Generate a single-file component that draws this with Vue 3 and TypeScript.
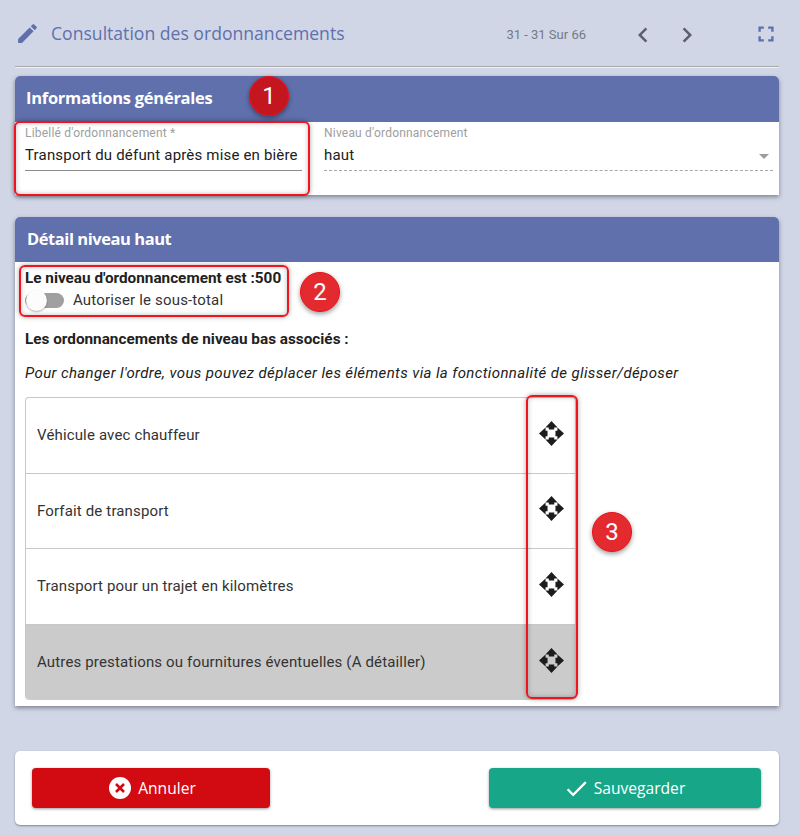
<script setup lang="ts">
const rows = [
  { label: 'Véhicule avec chauffeur', active: false },
  { label: 'Forfait de transport', active: false },
  { label: 'Transport pour un trajet en kilomètres', active: false },
  { label: 'Autres prestations ou fournitures éventuelles (A détailler)', active: true },
]
</script>

<template>
  <div class="page">
    <header class="topbar">
      <svg class="edit-icon" viewBox="0 0 24 24"><path d="M3 17.25V21h3.75L17.81 9.94l-3.75-3.75L3 17.25zM20.71 7.04a1 1 0 0 0 0-1.41l-2.34-2.34a1 1 0 0 0-1.41 0l-1.83 1.83 3.75 3.75 1.83-1.83z" /></svg>
      <h1 class="title">Consultation des ordonnancements</h1>
      <span class="pager">31 - 31 Sur 66</span>
      <svg class="chevron prev" viewBox="0 0 24 24"><path d="M15.41 7.41 14 6l-6 6 6 6 1.41-1.41L10.83 12z" /></svg>
      <svg class="chevron next" viewBox="0 0 24 24"><path d="M8.59 16.59 10 18l6-6-6-6-1.41 1.41L13.17 12z" /></svg>
      <svg class="fullscreen" viewBox="0 0 24 24"><path d="M5 5h5v2.200H7.200V10H5V5zm9 0h5v5h-2.200V7.200H14V5zM5 14h2.200v2.800H10V19H5v-5zm11.800 0H19v5h-5v-2.200h2.800V14z" /></svg>
    </header>

    <section class="card first">
      <div class="card-head">Informations générales</div>
      <div class="fields">
        <div class="field">
          <label>Libellé d'ordonnancement *</label>
          <div class="value solid">Transport du défunt après mise en bière</div>
        </div>
        <div class="field">
          <label>Niveau d'ordonnancement</label>
          <div class="value dotted">haut<span class="caret"></span></div>
        </div>
      </div>
    </section>

    <section class="card second">
      <div class="card-head detail">Détail niveau haut</div>
      <div class="detail-body">
        <div class="level">Le niveau d'ordonnancement est :500</div>
        <div class="toggle-row">
          <span class="toggle"><span class="knob"></span></span>
          <span>Autoriser le sous-total</span>
        </div>
        <div class="assoc">Les ordonnancements de niveau bas associés :</div>
        <div class="hint">Pour changer l'ordre, vous pouvez déplacer les éléments via la fonctionnalité de glisser/déposer</div>
        <ul class="list">
          <li v-for="row in rows" :key="row.label" :class="{ active: row.active }">
            <span>{{ row.label }}</span>
            <svg class="move" viewBox="0 0 24 24">
              <path d="M12 0l5.800 6.300H14.600V8.200h-5.200V6.300H6.200zM12 24l-5.800-6.300H9.400V15.800h5.200v1.900h3.200zM0 12l6.300-5.800V9.400H8.200v5.200H6.300v3.200zM24 12l-6.300 5.800V14.600H15.800V9.400h1.900V6.200z" />
            </svg>
          </li>
        </ul>
      </div>
    </section>

    <footer class="card actions">
      <button class="btn cancel">
        <svg class="x-icon" viewBox="0 0 24 24"><circle cx="12" cy="12" r="11" fill="#fff" /><path d="M8 8l8 8m0-8l-8 8" stroke="#d20a11" stroke-width="2.600" fill="none" /></svg>
        Annuler
      </button>
      <button class="btn save">
        <svg class="check-icon" viewBox="0 0 24 24"><path d="M9 16.170 4.830 12l-1.420 1.410L9 19 21 7l-1.410-1.410z" /></svg>
        Sauvegarder
      </button>
    </footer>

    <!-- annotations drawn on top of the screenshot -->
    <div class="mark box-1"></div>
    <div class="mark box-2"></div>
    <div class="mark box-3"></div>
    <div class="badge badge-1">1</div>
    <div class="badge badge-2">2</div>
    <div class="badge badge-3">3</div>
  </div>
</template>

<style scoped>
.page {
  position: relative;
  width: 800px;
  height: 835px;
  box-sizing: border-box;
  padding: 0 21px 0 15px;
  background: #d0d6e6;
  font-family: Roboto, sans-serif;
  color: #212121;
  overflow: hidden;
}

.topbar {
  display: flex;
  align-items: center;
  height: 66px;
  border-bottom: 1px solid #a9a9a9;
  box-shadow: 0 1px 0 #eef0f6;
}
.edit-icon {
  width: 25px;
  height: 25px;
  margin: 0 11px 0 0;
  fill: #6070ad;
}
.title {
  flex: 1;
  margin: 0;
  font: 400 17.600px "Open Sans", sans-serif;
  color: #6070ad;
}
.pager {
  font-size: 13px;
  color: #757a85;
  margin: 2px 42px 0 0;
}
.chevron {
  width: 30px;
  height: 30px;
  margin-top: 4px;
  fill: #5c5f69;
}
.next {
  margin-left: 14px;
  margin-right: 51px;
}
.fullscreen {
  width: 26px;
  height: 26px;
  margin-top: 2px;
  fill: #6070ad;
}

.card {
  background: #fff;
  border-radius: 5px 5px 0 0;
  box-shadow: 0 2px 4px rgba(60, 64, 80, 0.55);
}
.first {
  margin-top: 9px;
  height: 119px;
}
.second {
  margin-top: 22px;
  height: 489px;
}
.card-head {
  height: 46px;
  padding-left: 11px;
  background: #6070ad;
  border-radius: 5px 5px 0 0;
  color: #fff;
  font: 700 16.500px/44px "Open Sans", sans-serif;
  letter-spacing: -0.27px;
}
.detail {
  height: 45px;
  padding-left: 12px;
  letter-spacing: -0.45px;
}

.fields {
  display: grid;
  grid-template-columns: 277px 449px;
  gap: 22px;
  padding: 4px 0 0 10px;
}
.field label {
  display: block;
  font-size: 12px;
  line-height: 14px;
  letter-spacing: 0.2px;
  color: #9e9e9e;
}
.value {
  position: relative;
  height: 29px;
  margin-top: 1px;
  font-size: 15px;
  line-height: 29px;
  letter-spacing: 0.18px;
  white-space: nowrap;
}
.solid {
  border-bottom: 1px solid #8b8b8b;
}
.dotted {
  border-bottom: 1px dashed #a8a8a8;
}
.caret {
  position: absolute;
  right: 4px;
  top: 13px;
  border: 5px solid transparent;
  border-top-color: #9e9e9e;
  border-bottom: 0;
}

.detail-body {
  padding: 8px 0 0 10px;
}
.level {
  font-size: 15.300px;
  line-height: 17px;
  font-weight: 700;
}
.toggle-row {
  display: flex;
  align-items: center;
  height: 22px;
  margin-top: 2px;
  gap: 9px;
  font-size: 15px;
  letter-spacing: 0.17px;
  color: #333;
}
.toggle {
  position: relative;
  width: 39px;
  height: 15px;
  border-radius: 8px;
  background: #a0a0a0;
}
.knob {
  position: absolute;
  left: 1px;
  top: -3px;
  width: 21px;
  height: 21px;
  border-radius: 50%;
  background: #fcfcfc;
  box-shadow: 0 1px 2px rgba(0, 0, 0, 0.3);
}
.assoc {
  margin-top: 20px;
  font-size: 15.300px;
  line-height: 17px;
  font-weight: 700;
}
.hint {
  margin-top: 17px;
  font-size: 15px;
  line-height: 17px;
  font-style: italic;
  letter-spacing: 0.38px;
  white-space: nowrap;
}
.list {
  width: 551px;
  margin: 15px 0 0;
  padding: 0;
  list-style: none;
  border: 1px solid #c8c8c8;
  border-bottom: 0;
  border-radius: 4px;
  box-sizing: border-box;
}
.list li {
  display: flex;
  align-items: center;
  justify-content: space-between;
  height: 75.500px;
  box-sizing: border-box;
  padding: 0 12px 0 11px;
  font-size: 15px;
  letter-spacing: 0.15px;
  color: #333;
  border-bottom: 1px solid #c8c8c8;
}
.list li.active {
  background: #cbcbcb;
  border-bottom: 0;
  border-radius: 0 0 4px 4px;
}
.move {
  width: 25px;
  height: 25px;
  margin: -4px -1px 0 0;
  fill: #1c1c1c;
}

.actions {
  display: flex;
  justify-content: space-between;
  align-items: center;
  margin-top: 45px;
  height: 74px;
  padding: 0 18px 0 17px;
  border-radius: 5px;
  box-shadow: 0 1px 2px rgba(60, 64, 80, 0.55);
}
.btn {
  display: flex;
  align-items: center;
  justify-content: center;
  height: 40px;
  gap: 6px;
  border: 0;
  border-radius: 4px;
  color: #fff;
  font: 400 15.600px "Open Sans", sans-serif;
  box-shadow: 0 1px 3px rgba(0, 0, 0, 0.4);
}
.cancel {
  width: 238px;
  padding: 0 0 0 2px;
  background: #d20a11;
}
.save {
  width: 272px;
  gap: 4px;
  padding: 0 2px 0 0;
  background: #18a689;
}
.x-icon {
  width: 24px;
  height: 24px;
}
.check-icon {
  width: 27px;
  height: 27px;
  fill: #fff;
}

.mark {
  position: absolute;
  box-sizing: border-box;
  border: 2px solid #f0141e;
  border-radius: 6px;
  box-shadow: 0 0 5px rgba(0, 0, 0, 0.35), inset 0 0 5px rgba(0, 0, 0, 0.25);
}
.box-1 {
  left: 14px;
  top: 121px;
  width: 296px;
  height: 75px;
}
.box-2 {
  left: 19px;
  top: 265px;
  width: 270px;
  height: 52px;
}
.box-3 {
  left: 526px;
  top: 395px;
  width: 52px;
  height: 304px;
}
.badge {
  position: absolute;
  width: 40px;
  height: 40px;
  box-sizing: border-box;
  border: 1px solid #f01018;
  border-radius: 50%;
  text-align: center;
  color: #fff;
  font: 400 24px/38px Roboto, sans-serif;
  box-shadow: 0 2px 5px rgba(0, 0, 0, 0.4);
}
.badge-1 {
  left: 249px;
  top: 76px;
  background: #c4161f;
}
.badge-2 {
  left: 300px;
  top: 272px;
  background: #e32a2e;
}
.badge-3 {
  left: 592px;
  top: 512px;
  background: #e32a2e;
}
</style>

<style>
html,
body {
  margin: 0;
  background: #d0d6e6;
}
</style>
